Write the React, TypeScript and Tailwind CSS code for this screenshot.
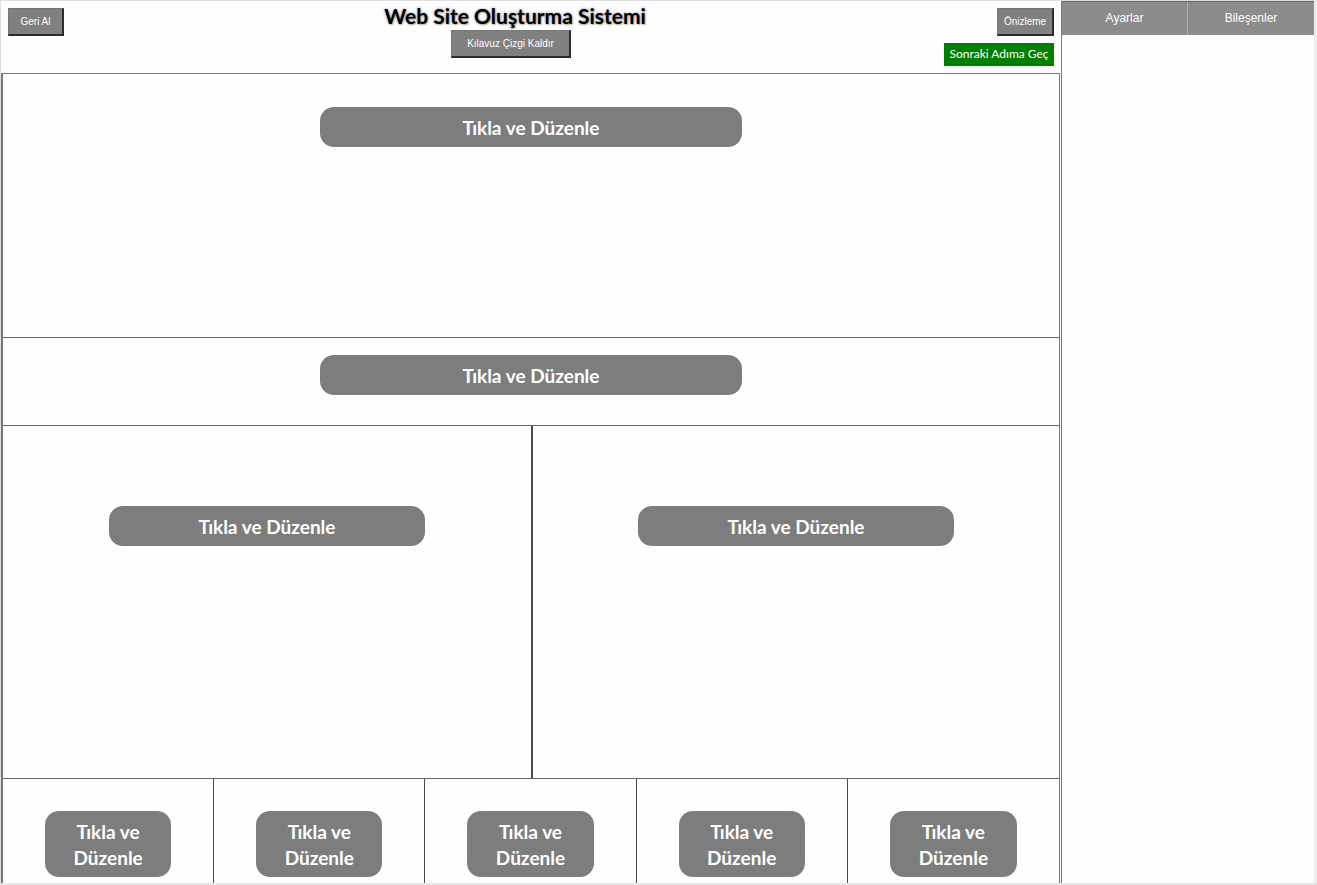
import React from 'react';

function EditButton({ width }: { width: string }) {
  return (
    <button
      type="button"
      className={`${width} rounded-[14px] bg-[#7d7d7d] pt-2 pb-1.5 text-[19px] leading-[26px] font-bold text-white font-[Lato,sans-serif]`}
    >
      Tıkla ve Düzenle
    </button>
  );
}

function ToolButton({ children, className }: { children: React.ReactNode; className: string }) {
  return (
    <button
      type="button"
      className={`${className} block h-7 border border-r-2 border-b-2 border-[#777] border-r-[#2b2b2b] border-b-[#2b2b2b] bg-[#808080] pt-px text-[10px] leading-4 text-white`}
    >
      {children}
    </button>
  );
}

export default function App() {
  return (
    <div className="flex min-h-screen flex-col border-t border-l border-[#dfdfdf] bg-[#fefefe] font-['Liberation_Sans',Arial,sans-serif]">
      <div className="flex flex-1">
        <main className="flex min-w-0 flex-1 flex-col">
          <header className="grid h-[72px] grid-cols-[1fr_auto_1fr] px-[7px]">
            <div className="pt-[7px]">
              <ToolButton className="w-14">Geri Al</ToolButton>
            </div>
            <div className="flex flex-col items-center pr-8">
              <h1 className="pt-px pb-px text-[21px] leading-[27px] font-bold text-black font-[Lato,sans-serif] [text-shadow:0_0_3px_#8080b8,1px_1px_1px_#d6d68a]">
                Web Site Oluşturma Sistemi
              </h1>
              <div className="pr-2">
                <ToolButton className="w-[120px]">Kılavuz Çizgi Kaldır</ToolButton>
              </div>
            </div>
            <div className="flex flex-col items-end pt-[7px]">
              <ToolButton className="w-[57px]">Önizleme</ToolButton>
              <button type="button" className="mt-[7px] h-[23px] w-[110px] bg-[#008000] pb-px text-xs text-white font-[Lato,sans-serif]">
                Sonraki Adıma Geç
              </button>
            </div>
          </header>
          <div className="mr-px flex flex-1 flex-col border-t border-r border-l-2 border-[#777]">
            <section className="border-b border-[#666] pt-[33px] pb-[190px] text-center">
              <EditButton width="w-2/5" />
            </section>
            <section className="border-b border-[#666] pt-[17px] pb-[30px] text-center">
              <EditButton width="w-2/5" />
            </section>
            <div className="grid grid-cols-2 border-b border-[#666]">
              <section className="pt-20 pb-[232px] text-center">
                <EditButton width="w-3/5" />
              </section>
              <section className="border-l-2 border-[#4c4c4c] pt-20 pb-[232px] text-center">
                <EditButton width="w-3/5" />
              </section>
            </div>
            <div className="grid flex-1 grid-cols-5 divide-x divide-[#4c4c4c]">
              {[1, 2, 3, 4, 5].map((column) => (
                <section key={column} className="pt-8 pb-[5px] text-center">
                  <EditButton width="w-3/5 px-5" />
                </section>
              ))}
            </div>
          </div>
        </main>
        <aside className="flex w-[256px] border-l border-[#777]">
          <div className="flex-1 border-t border-[#666]">
            <nav className="grid grid-cols-2 divide-x divide-[#b0b0b0] bg-[#8c8c8c] text-xs text-white">
              <button type="button" className="h-[33px] pb-px">Ayarlar</button>
              <button type="button" className="h-[33px] pb-px">Bileşenler</button>
            </nav>
          </div>
          <div className="w-[3px] bg-[#eee]" />
        </aside>
      </div>
      <div className="h-[2px] bg-[#e6e6e6]" />
    </div>
  );
}
